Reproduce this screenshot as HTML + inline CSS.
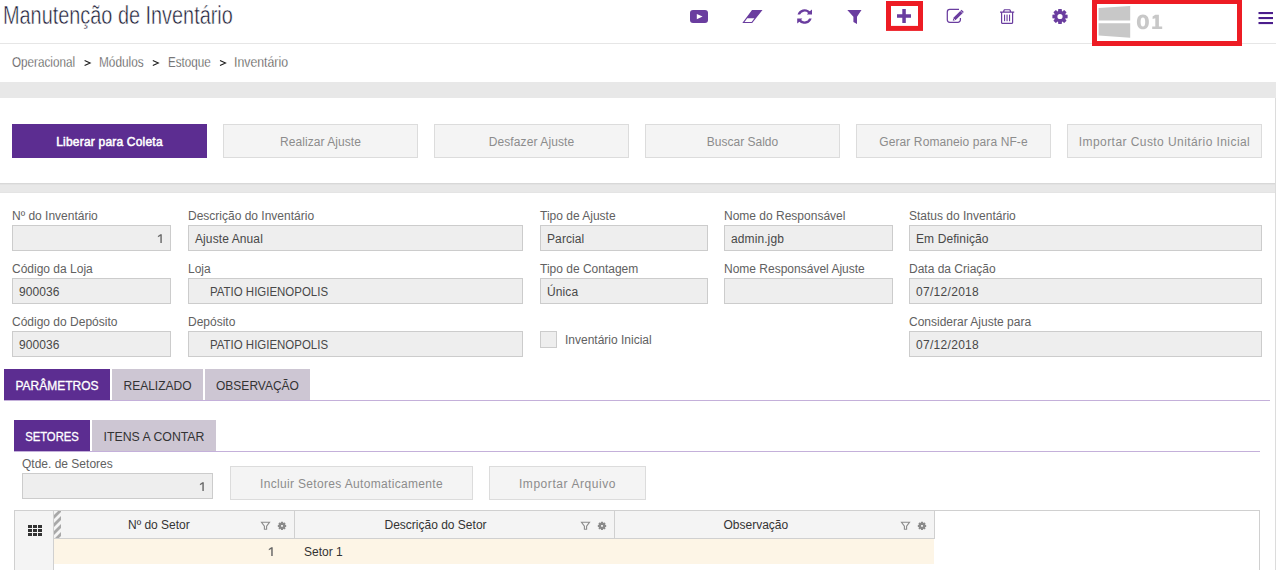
<!DOCTYPE html>
<html><head><meta charset="utf-8">
<style>
*{box-sizing:border-box;margin:0;padding:0}
html,body{width:1276px;height:570px;overflow:hidden;background:#fff;font-family:"Liberation Sans",sans-serif;position:relative}
.a{position:absolute}
.t{white-space:nowrap;position:absolute;line-height:1}
</style></head><body>
<div class="t" style="left:3px;top:3.14px;font-size:25px;color:#1e1e38;font-weight:normal;font-family:'Liberation Sans';transform:scaleX(0.795);transform-origin:0 0;-webkit-text-stroke:0.5px #fff;">Manutenção de Inventário</div>
<div class="a" style="left:0px;top:43px;width:1092px;height:1px;background:#e6e6e6;"></div>
<div class="a" style="left:1242px;top:43px;width:34px;height:1px;background:#e6e6e6;"></div>
<div class="t" style="left:12px;top:54.30px;font-size:15px;color:#383838;font-weight:normal;font-family:'Liberation Sans';transform:scaleX(0.779);transform-origin:0 0;-webkit-text-stroke:0.35px #fff;">Operacional</div>
<div class="t" style="left:99px;top:54.30px;font-size:15px;color:#383838;font-weight:normal;font-family:'Liberation Sans';transform:scaleX(0.787);transform-origin:0 0;-webkit-text-stroke:0.35px #fff;">Módulos</div>
<div class="t" style="left:168px;top:54.30px;font-size:15px;color:#383838;font-weight:normal;font-family:'Liberation Sans';transform:scaleX(0.778);transform-origin:0 0;-webkit-text-stroke:0.35px #fff;">Estoque</div>
<div class="t" style="left:234px;top:54.30px;font-size:15px;color:#383838;font-weight:normal;font-family:'Liberation Sans';transform:scaleX(0.82);transform-origin:0 0;-webkit-text-stroke:0.35px #fff;">Inventário</div>
<svg class="a" style="left:0;top:0" width="400" height="80"><path d="M84.6 60.4 L90.19999999999999 63 L84.6 65.6" fill="none" stroke="#1a1a1a" stroke-width="1.05"/><path d="M152.8 60.4 L158.4 63 L152.8 65.6" fill="none" stroke="#1a1a1a" stroke-width="1.05"/><path d="M220 60.4 L225.6 63 L220 65.6" fill="none" stroke="#1a1a1a" stroke-width="1.05"/></svg>
<!-- header icons -->
<svg class="a" style="left:0;top:0" width="1276" height="50" viewBox="0 0 1276 50">
 <g fill="#6a3d9f">
  <!-- youtube -->
  <rect x="690" y="10" width="18" height="13" rx="3" ry="3"/>
  <!-- eraser -->
  <path d="M752 10 H762.5 L752.2 23 H742.3 Z M747.3 18.3 H754.4 L751.6 21.9 H744.5 Z" fill-rule="evenodd"/>
  <!-- refresh -->
  <path d="M797.55 14.6 A7.3 7.3 0 0 1 809.76 11.34 L812 9.6 V14.6 H806.9 L808.06 13.04 A4.9 4.9 0 0 0 800.08 14.6 Z"/>
  <path d="M811.65 18.4 A7.3 7.3 0 0 1 799.44 21.66 L797.2 23.4 V18.4 H802.3 L801.14 19.96 A4.9 4.9 0 0 0 809.12 18.4 Z"/>
  <!-- filter -->
  <path d="M847.3 10 H861.5 L857 16.8 V24 L853.4 22 V16.8 Z"/>
  <!-- plus -->
  <path d="M902.3 9 H905.8 V14.3 H911 V17.8 H905.8 V23 H902.3 V17.8 H897 V14.3 H902.3 Z"/>
  <!-- edit -->
  <path d="M959 9.45 H949.8 A2.5 2.5 0 0 0 947.3 11.95 V19.75 A2.5 2.5 0 0 0 949.8 22.25 H957.9 A2.5 2.5 0 0 0 960.4 19.75 V17.9" fill="none" stroke="#6a3d9f" stroke-width="1.25"/>
  <path d="M952.8 20.7 L953.44 17.8 L961.57 9.67 L963.83 11.93 L955.7 20.06 Z"/>
  <path d="M960.4 10.8 L962.7 13.1" stroke="#fff" stroke-width="0.6"/>
  <path d="M953.6 18.6 L954.9 19.9" stroke="#fff" stroke-width="0.8"/>
  <!-- trash -->
  <path d="M1004.5 9.2 H1009.5 C1010.3 9.2 1010.8 9.8 1010.9 10.6 L1011.2 11.6 H1014.2 V12.8 H1013.2 V22.6 C1013.2 23.4 1012.7 24 1012 24 H1002.2 C1001.5 24 1001 23.4 1001 22.6 V12.8 H1000 V11.6 H1003 L1003.3 10.6 C1003.4 9.8 1003.9 9.2 1004.5 9.2 Z M1004.4 11.6 H1009.8 L1009.6 10.7 C1009.5 10.4 1009.3 10.3 1009.1 10.3 H1005.1 C1004.9 10.3 1004.7 10.4 1004.6 10.7 Z M1002.2 12.8 V22.4 C1002.2 22.7 1002.3 22.8 1002.5 22.8 H1011.7 C1011.9 22.8 1012 22.7 1012 22.4 V12.8 Z" fill-rule="evenodd"/>
  <rect x="1004" y="14.6" width="1.1" height="6.6"/>
  <rect x="1006.5" y="14.6" width="1.1" height="6.6"/>
  <rect x="1009" y="14.6" width="1.1" height="6.6"/>
  <!-- gear -->
  <path id="gear" d="M1065.24 14.53 L1067.61 14.80 L1067.61 18.20 L1065.24 18.47 L1065.10 18.81 L1066.59 20.68 L1064.18 23.09 L1062.31 21.60 L1061.97 21.74 L1061.70 24.11 L1058.30 24.11 L1058.03 21.74 L1057.69 21.60 L1055.82 23.09 L1053.41 20.68 L1054.90 18.81 L1054.76 18.47 L1052.39 18.20 L1052.39 14.80 L1054.76 14.53 L1054.90 14.19 L1053.41 12.32 L1055.82 9.91 L1057.69 11.40 L1058.03 11.26 L1058.30 8.89 L1061.70 8.89 L1061.97 11.26 L1062.31 11.40 L1064.18 9.91 L1066.59 12.32 L1065.10 14.19 Z M1062.60 16.5 A2.6 2.6 0 1 0 1057.40 16.5 A2.6 2.6 0 1 0 1062.60 16.5 Z" fill-rule="evenodd"/>
 </g>
 <path d="M696.8 14 L702.6 16.6 L696.8 19.3 Z" fill="#fff"/>
 <!-- red boxes -->
 <rect x="888.5" y="3.5" width="32" height="24.9" fill="none" stroke="#ed1c24" stroke-width="5"/>
 <rect x="1094.5" y="1.5" width="145" height="42" fill="none" stroke="#ed1c24" stroke-width="5"/>
 <!-- windows -->
 <path d="M1098.6 8 L1130.2 6 V20.6 H1098.6 Z M1098.6 23.2 H1130.2 V37.7 L1098.6 35.5 Z" fill="#c8c8c8"/>
 <!-- hamburger -->
 <g fill="#4b1d8c"><rect x="1258.5" y="12" width="14.5" height="2.1"/><rect x="1258.5" y="17" width="14.5" height="2.1"/><rect x="1258.5" y="22" width="14.5" height="2.1"/></g>
</svg>


<svg class="a" style="left:0;top:0" width="1276" height="50"><g fill="#c8c8c8" fill-rule="evenodd">
<path d="M1142.9 14.5 C1146.9 14.5 1148.9 17.5 1148.9 21.9 C1148.9 26.3 1146.9 29.3 1142.9 29.3 C1138.9 29.3 1136.9 26.3 1136.9 21.9 C1136.9 17.5 1138.9 14.5 1142.9 14.5 Z M1142.9 17.4 C1141.4 17.4 1140.6 18.8 1140.6 21.9 C1140.6 25 1141.4 26.4 1142.9 26.4 C1144.4 26.4 1145.2 25 1145.2 21.9 C1145.2 18.8 1144.4 17.4 1142.9 17.4 Z"/>
<path d="M1155.3 14.7 H1158.9 V26.6 H1162.2 V29.1 H1152.2 V26.6 H1155.3 V18.2 L1152.6 19.1 V16.4 Z"/>
</g></svg>

<div class="a" style="left:0px;top:82px;width:1276px;height:488px;background:#e8e8e8;"></div>
<div class="a" style="left:0px;top:98px;width:1275px;height:85px;background:#fff;"></div>
<div class="a" style="left:0px;top:183px;width:1275px;height:1px;background:#d8d8d8;"></div>
<div class="a" style="left:0px;top:184px;width:1275px;height:1px;background:#e2e2e2;"></div>
<div class="a" style="left:0px;top:192px;width:1275px;height:1px;background:#e4e4e4;"></div>
<div class="a" style="left:0px;top:193px;width:1275px;height:377px;background:#fff;"></div>
<div class="a" style="left:1275px;top:98px;width:1px;height:472px;background:#dcdcdc;"></div>
<div class="a" style="left:12px;top:124px;width:195px;height:34px;background:#5c2d91"></div>
<div class="t" style="left:12px;width:195px;text-align:center;top:136.34px;font-size:12px;color:#fff;font-weight:normal;-webkit-text-stroke:0.5px #fff;letter-spacing:0.2px">Liberar para Coleta</div>
<div class="a" style="left:223px;top:124px;width:195px;height:34px;background:#f4f4f4;border:1px solid #dcdcdc"></div>
<div class="t" style="left:223px;width:195px;text-align:center;top:136.34px;font-size:12px;color:#8c8c8c;font-weight:normal;letter-spacing:0.05px">Realizar Ajuste</div>
<div class="a" style="left:434px;top:124px;width:195px;height:34px;background:#f4f4f4;border:1px solid #dcdcdc"></div>
<div class="t" style="left:434px;width:195px;text-align:center;top:136.34px;font-size:12px;color:#8c8c8c;font-weight:normal;letter-spacing:0.1px">Desfazer Ajuste</div>
<div class="a" style="left:645px;top:124px;width:195px;height:34px;background:#f4f4f4;border:1px solid #dcdcdc"></div>
<div class="t" style="left:645px;width:195px;text-align:center;top:136.34px;font-size:12px;color:#8c8c8c;font-weight:normal;letter-spacing:0px">Buscar Saldo</div>
<div class="a" style="left:856px;top:124px;width:195px;height:34px;background:#f4f4f4;border:1px solid #dcdcdc"></div>
<div class="t" style="left:856px;width:195px;text-align:center;top:136.34px;font-size:12px;color:#8c8c8c;font-weight:normal;letter-spacing:0.1px">Gerar Romaneio para NF-e</div>
<div class="a" style="left:1067px;top:124px;width:195px;height:34px;background:#f4f4f4;border:1px solid #dcdcdc"></div>
<div class="t" style="left:1067px;width:195px;text-align:center;top:136.34px;font-size:12px;color:#8c8c8c;font-weight:normal;letter-spacing:0.43px">Importar Custo Unitário Inicial</div>
<div class="t" style="left:12px;top:209.84px;font-size:12px;color:#616161;font-weight:normal;font-family:'Liberation Sans';">Nº do Inventário</div>
<div class="a" style="left:12px;top:225px;width:159px;height:26px;background:#eeeeee;border:1px solid #cccccc"></div>
<svg class="a" style="left:0;top:0;overflow:visible" width="1" height="1"><path d="M160.35000000000002 234.2 H161.8 V243 H160.35000000000002 V236.1 L157.9 237.29999999999998 V235.89999999999998 Z" fill="#6a6a6a"/></svg>
<div class="t" style="left:188px;top:209.84px;font-size:12px;color:#616161;font-weight:normal;font-family:'Liberation Sans';">Descrição do Inventário</div>
<div class="a" style="left:188px;top:225px;width:335px;height:26px;background:#eeeeee;border:1px solid #cccccc"></div>
<div class="t" style="left:195px;top:232.84px;font-size:12px;color:#484848;font-weight:normal;font-family:'Liberation Sans';letter-spacing:0.1px;">Ajuste Anual</div>
<div class="t" style="left:540px;top:209.84px;font-size:12px;color:#616161;font-weight:normal;font-family:'Liberation Sans';">Tipo de Ajuste</div>
<div class="a" style="left:540px;top:225px;width:168px;height:26px;background:#eeeeee;border:1px solid #cccccc"></div>
<div class="t" style="left:547px;top:232.84px;font-size:12px;color:#484848;font-weight:normal;font-family:'Liberation Sans';letter-spacing:0.1px;">Parcial</div>
<div class="t" style="left:724px;top:209.84px;font-size:12px;color:#616161;font-weight:normal;font-family:'Liberation Sans';">Nome do Responsável</div>
<div class="a" style="left:724px;top:225px;width:169px;height:26px;background:#eeeeee;border:1px solid #cccccc"></div>
<div class="t" style="left:731px;top:232.84px;font-size:12px;color:#484848;font-weight:normal;font-family:'Liberation Sans';letter-spacing:0.1px;">admin.jgb</div>
<div class="t" style="left:909px;top:209.84px;font-size:12px;color:#616161;font-weight:normal;font-family:'Liberation Sans';">Status do Inventário</div>
<div class="a" style="left:909px;top:225px;width:353px;height:26px;background:#eeeeee;border:1px solid #cccccc"></div>
<div class="t" style="left:916px;top:232.84px;font-size:12px;color:#484848;font-weight:normal;font-family:'Liberation Sans';letter-spacing:0.1px;">Em Definição</div>
<div class="t" style="left:12px;top:262.84px;font-size:12px;color:#616161;font-weight:normal;font-family:'Liberation Sans';">Código da Loja</div>
<div class="a" style="left:12px;top:278px;width:159px;height:26px;background:#eeeeee;border:1px solid #cccccc"></div>
<div class="t" style="left:19px;top:285.84px;font-size:12px;color:#484848;font-weight:normal;font-family:'Liberation Sans';letter-spacing:0.1px;">900036</div>
<div class="t" style="left:188px;top:262.84px;font-size:12px;color:#616161;font-weight:normal;font-family:'Liberation Sans';">Loja</div>
<div class="a" style="left:188px;top:278px;width:335px;height:26px;background:#eeeeee;border:1px solid #cccccc"></div>
<div class="t" style="left:209.5px;top:285.84px;font-size:12px;color:#484848;font-weight:normal;font-family:'Liberation Sans';transform:scaleX(0.955);transform-origin:0 0;letter-spacing:0px;">PATIO HIGIENOPOLIS</div>
<div class="t" style="left:540px;top:262.84px;font-size:12px;color:#616161;font-weight:normal;font-family:'Liberation Sans';">Tipo de Contagem</div>
<div class="a" style="left:540px;top:278px;width:168px;height:26px;background:#eeeeee;border:1px solid #cccccc"></div>
<div class="t" style="left:547px;top:285.84px;font-size:12px;color:#484848;font-weight:normal;font-family:'Liberation Sans';letter-spacing:0.1px;">Única</div>
<div class="t" style="left:724px;top:262.84px;font-size:12px;color:#616161;font-weight:normal;font-family:'Liberation Sans';">Nome Responsável Ajuste</div>
<div class="a" style="left:724px;top:278px;width:169px;height:26px;background:#eeeeee;border:1px solid #cccccc"></div>
<div class="t" style="left:909px;top:262.84px;font-size:12px;color:#616161;font-weight:normal;font-family:'Liberation Sans';">Data da Criação</div>
<div class="a" style="left:909px;top:278px;width:353px;height:26px;background:#eeeeee;border:1px solid #cccccc"></div>
<div class="t" style="left:916px;top:285.84px;font-size:12px;color:#484848;font-weight:normal;font-family:'Liberation Sans';letter-spacing:0.3px;">07/12/2018</div>
<div class="t" style="left:12px;top:315.84px;font-size:12px;color:#616161;font-weight:normal;font-family:'Liberation Sans';">Código do Depósito</div>
<div class="a" style="left:12px;top:331px;width:159px;height:26px;background:#eeeeee;border:1px solid #cccccc"></div>
<div class="t" style="left:19px;top:338.84px;font-size:12px;color:#484848;font-weight:normal;font-family:'Liberation Sans';letter-spacing:0.1px;">900036</div>
<div class="t" style="left:188px;top:315.84px;font-size:12px;color:#616161;font-weight:normal;font-family:'Liberation Sans';">Depósito</div>
<div class="a" style="left:188px;top:331px;width:335px;height:26px;background:#eeeeee;border:1px solid #cccccc"></div>
<div class="t" style="left:209.5px;top:338.84px;font-size:12px;color:#484848;font-weight:normal;font-family:'Liberation Sans';transform:scaleX(0.955);transform-origin:0 0;letter-spacing:0px;">PATIO HIGIENOPOLIS</div>
<div class="t" style="left:909px;top:315.84px;font-size:12px;color:#616161;font-weight:normal;font-family:'Liberation Sans';">Considerar Ajuste para</div>
<div class="a" style="left:909px;top:331px;width:353px;height:26px;background:#eeeeee;border:1px solid #cccccc"></div>
<div class="t" style="left:916px;top:338.84px;font-size:12px;color:#484848;font-weight:normal;font-family:'Liberation Sans';letter-spacing:0.3px;">07/12/2018</div>
<div class="a" style="left:540px;top:331px;width:17px;height:17px;background:#eeeeee;border:1px solid #cccccc"></div>
<div class="t" style="left:565px;top:333.84px;font-size:12px;color:#616161;font-weight:normal;font-family:'Liberation Sans';">Inventário Inicial</div>
<div class="a" style="left:4px;top:369px;width:106px;height:31px;background:#5c2d91;"></div>
<div class="t" style="left:4px;width:106px;text-align:center;top:379.84px;font-size:12px;color:#fff;font-weight:normal;-webkit-text-stroke:0.3px #fff;">PARÂMETROS</div>
<div class="a" style="left:112px;top:369px;width:91px;height:31px;background:#cdc6d3;"></div>
<div class="t" style="left:112px;width:91px;text-align:center;top:379.84px;font-size:12px;color:#333;font-weight:normal;">REALIZADO</div>
<div class="a" style="left:205px;top:369px;width:105px;height:31px;background:#cdc6d3;"></div>
<div class="t" style="left:205px;width:105px;text-align:center;top:379.84px;font-size:12px;color:#333;font-weight:normal;">OBSERVAÇÃO</div>
<div class="a" style="left:4px;top:400px;width:1266px;height:1px;background:#c4b0da;"></div>
<div class="a" style="left:14px;top:420px;width:76px;height:31px;background:#5c2d91;"></div>
<div class="t" style="left:14px;width:76px;text-align:center;top:430.84px;font-size:12px;color:#fff;font-weight:normal;-webkit-text-stroke:0.3px #fff;transform:scaleX(0.94);">SETORES</div>
<div class="a" style="left:92px;top:420px;width:124px;height:31px;background:#cdc6d3;"></div>
<div class="t" style="left:92px;width:124px;text-align:center;top:430.84px;font-size:12px;color:#333;font-weight:normal;transform:scaleX(1.025);">ITENS A CONTAR</div>
<div class="a" style="left:14px;top:451px;width:1246px;height:1px;background:#c4b0da;"></div>
<div class="t" style="left:22px;top:457.84px;font-size:12px;color:#616161;font-weight:normal;font-family:'Liberation Sans';">Qtde. de Setores</div>
<div class="a" style="left:22px;top:473px;width:191px;height:26px;background:#eeeeee;border:1px solid #cccccc"></div>
<svg class="a" style="left:0;top:0;overflow:visible" width="1" height="1"><path d="M202.35000000000002 482.2 H203.8 V491 H202.35000000000002 V484.09999999999997 L199.9 485.3 V483.9 Z" fill="#6a6a6a"/></svg>
<div class="a" style="left:230px;top:466px;width:243px;height:34px;background:#f4f4f4;border:1px solid #dcdcdc"></div>
<div class="t" style="left:230px;width:243px;text-align:center;top:478.34px;font-size:12px;color:#8c8c8c;font-weight:normal;letter-spacing:0.33px">Incluir Setores Automaticamente</div>
<div class="a" style="left:489px;top:466px;width:157px;height:34px;background:#f4f4f4;border:1px solid #dcdcdc"></div>
<div class="t" style="left:489px;width:157px;text-align:center;top:478.34px;font-size:12px;color:#8c8c8c;font-weight:normal;letter-spacing:0.57px">Importar Arquivo</div>
<div class="a" style="left:14px;top:510px;width:1246px;height:60px;background:#fff;border:1px solid #d0d0d0;border-bottom:none"></div>
<div class="a" style="left:15px;top:511px;width:39px;height:59px;background:#f4f4f4;border-right:1px solid #d0d0d0"></div>
<div class="a" style="left:54px;top:511px;width:881px;height:28px;background:#f4f4f4;border-bottom:1px solid #d0d0d0"></div>
<div class="a" style="left:294px;top:511px;width:1px;height:28px;background:#d0d0d0;"></div>
<div class="a" style="left:614px;top:511px;width:1px;height:28px;background:#d0d0d0;"></div>
<div class="a" style="left:934px;top:511px;width:1px;height:28px;background:#d0d0d0;"></div>
<div class="a" style="left:54px;top:539px;width:880px;height:25px;background:#fdf5e6;"></div>
<svg class="a" style="left:0;top:0" width="1276" height="570"><rect x="28" y="525" width="4" height="3" fill="#333"/><rect x="28" y="529" width="4" height="3" fill="#333"/><rect x="28" y="533" width="4" height="3" fill="#333"/><rect x="33" y="525" width="4" height="3" fill="#333"/><rect x="33" y="529" width="4" height="3" fill="#333"/><rect x="33" y="533" width="4" height="3" fill="#333"/><rect x="38" y="525" width="4" height="3" fill="#333"/><rect x="38" y="529" width="4" height="3" fill="#333"/><rect x="38" y="533" width="4" height="3" fill="#333"/><clipPath id="hc"><rect x="54" y="511" width="7" height="27"/></clipPath><g clip-path="url(#hc)" stroke="#a8a8a8" stroke-width="2.7"><line x1="50" y1="513" x2="66" y2="497"/><line x1="50" y1="521" x2="66" y2="505"/><line x1="50" y1="529" x2="66" y2="513"/><line x1="50" y1="537" x2="66" y2="521"/><line x1="50" y1="545" x2="66" y2="529"/><line x1="50" y1="553" x2="66" y2="537"/><line x1="50" y1="561" x2="66" y2="545"/></g><path d="M261.5 522.3000000000001 H269.5 L266.6 526.2 V529.2 H264.4 V526.2 Z" fill="none" stroke="#8a8a8a" stroke-width="1.1" stroke-linejoin="miter"/><path d="M285.12 524.83 L286.18 524.88 L286.18 526.92 L285.12 526.97 L284.96 527.35 L285.68 528.13 L284.23 529.58 L283.45 528.86 L283.07 529.02 L283.02 530.08 L280.98 530.08 L280.93 529.02 L280.55 528.86 L279.77 529.58 L278.32 528.13 L279.04 527.35 L278.88 526.97 L277.82 526.92 L277.82 524.88 L278.88 524.83 L279.04 524.45 L278.32 523.67 L279.77 522.22 L280.55 522.94 L280.93 522.78 L280.98 521.72 L283.02 521.72 L283.07 522.78 L283.45 522.94 L284.23 522.22 L285.68 523.67 L284.96 524.45 Z M281.1 525.0 H282.9 V526.8 H281.1 Z" fill="#8a8a8a" fill-rule="evenodd"/><path d="M581.5 522.3000000000001 H589.5 L586.6 526.2 V529.2 H584.4 V526.2 Z" fill="none" stroke="#8a8a8a" stroke-width="1.1" stroke-linejoin="miter"/><path d="M605.12 524.83 L606.18 524.88 L606.18 526.92 L605.12 526.97 L604.96 527.35 L605.68 528.13 L604.23 529.58 L603.45 528.86 L603.07 529.02 L603.02 530.08 L600.98 530.08 L600.93 529.02 L600.55 528.86 L599.77 529.58 L598.32 528.13 L599.04 527.35 L598.88 526.97 L597.82 526.92 L597.82 524.88 L598.88 524.83 L599.04 524.45 L598.32 523.67 L599.77 522.22 L600.55 522.94 L600.93 522.78 L600.98 521.72 L603.02 521.72 L603.07 522.78 L603.45 522.94 L604.23 522.22 L605.68 523.67 L604.96 524.45 Z M601.1 525.0 H602.9 V526.8 H601.1 Z" fill="#8a8a8a" fill-rule="evenodd"/><path d="M901.5 522.3000000000001 H909.5 L906.6 526.2 V529.2 H904.4 V526.2 Z" fill="none" stroke="#8a8a8a" stroke-width="1.1" stroke-linejoin="miter"/><path d="M925.12 524.83 L926.18 524.88 L926.18 526.92 L925.12 526.97 L924.96 527.35 L925.68 528.13 L924.23 529.58 L923.45 528.86 L923.07 529.02 L923.02 530.08 L920.98 530.08 L920.93 529.02 L920.55 528.86 L919.77 529.58 L918.32 528.13 L919.04 527.35 L918.88 526.97 L917.82 526.92 L917.82 524.88 L918.88 524.83 L919.04 524.45 L918.32 523.67 L919.77 522.22 L920.55 522.94 L920.93 522.78 L920.98 521.72 L923.02 521.72 L923.07 522.78 L923.45 522.94 L924.23 522.22 L925.68 523.67 L924.96 524.45 Z M921.1 525.0 H922.9 V526.8 H921.1 Z" fill="#8a8a8a" fill-rule="evenodd"/></svg>
<div class="t" style="left:128px;top:518.84px;font-size:12px;color:#333;font-weight:normal;font-family:'Liberation Sans';">Nº do Setor</div>
<div class="t" style="left:384.5px;top:518.84px;font-size:12px;color:#333;font-weight:normal;font-family:'Liberation Sans';">Descrição do Setor</div>
<div class="t" style="left:723.5px;top:518.84px;font-size:12px;color:#333;font-weight:normal;font-family:'Liberation Sans';">Observação</div>
<svg class="a" style="left:0;top:0;overflow:visible" width="1" height="1"><path d="M271.25 547.2 H272.7 V556 H271.25 V549.1 L268.8 550.3000000000001 V548.9000000000001 Z" fill="#666"/></svg>
<div class="t" style="left:304px;top:545.84px;font-size:12px;color:#333;font-weight:normal;font-family:'Liberation Sans';">Setor 1</div>
</body></html>
